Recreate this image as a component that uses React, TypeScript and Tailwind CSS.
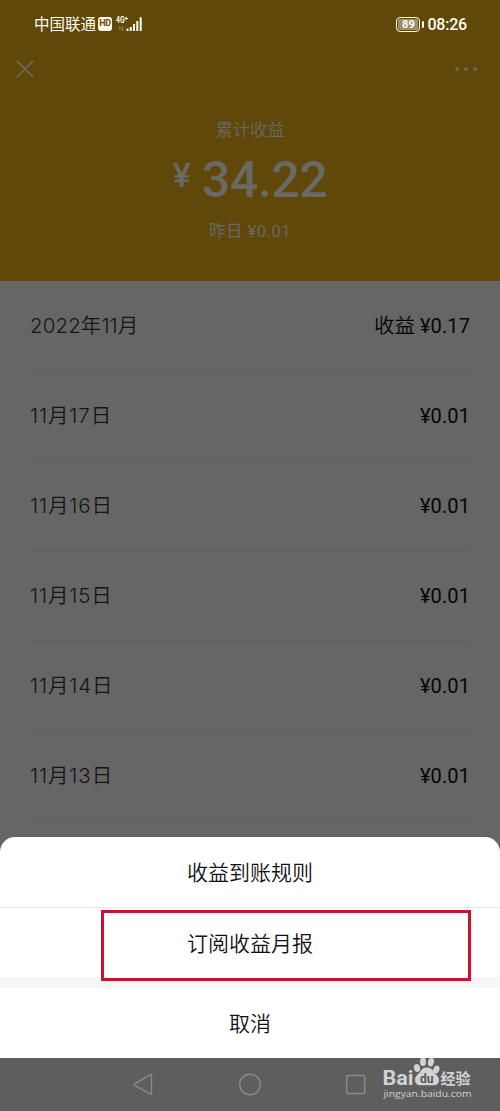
interface Earning {
  label: string;
  prefix?: string;
  amount: string;
}

const earnings: Earning[] = [
  { label: "2022年11月", prefix: "收益", amount: "¥0.17" },
  { label: "11月17日", amount: "¥0.01" },
  { label: "11月16日", amount: "¥0.01" },
  { label: "11月15日", amount: "¥0.01" },
  { label: "11月14日", amount: "¥0.01" },
  { label: "11月13日", amount: "¥0.01" },
];

function StatusBar() {
  return (
    <div className="flex h-12 items-center justify-between pl-[34px] pr-[33px] text-[#fffdf3]">
      <div className="flex items-center">
        <span className="pt-[3px] text-[15.5px] leading-none">中国联通</span>
        <span className="ml-[2px] flex h-[14px] w-[14px] items-center justify-center rounded-[3px] bg-[#fff8e4] text-[9px] font-bold tracking-[-0.3px] text-[#5f480a]">
          HD
        </span>
        <svg width="28" height="18" viewBox="0 0 28 18" className="ml-[3px]">
          <text x="1" y="8" fontSize="8.5" fontWeight="700" fill="currentColor" textLength="8.5" lengthAdjust="spacingAndGlyphs">
            4G
          </text>
          <path d="M9.500 3.500h3.500M11.200 1.800v3.500" stroke="currentColor" strokeWidth="1" />
          <path d="M5 15.500v-4l-1.200 1.200M7.500 11.500v4l1.200-1.200" stroke="#a08c55" strokeWidth="1" fill="none" />
          <path
            d="M11.500 13.500h2v2.500h-2zM14.800 12h2v4h-2zM18 9h2v7h-2zM21.300 6h2v10h-2zM24.700 2.300h2v13.700h-2z"
            fill="currentColor"
          />
        </svg>
      </div>
      <div className="flex items-center">
        <span className="flex h-[15px] w-6 items-center justify-center rounded-[4px] border-[1.5px] border-[#fff8e4] p-px">
          <span className="flex h-full w-full items-center justify-center rounded-[1px] bg-[#9c8e67] text-[11px] font-bold leading-none">
            89
          </span>
        </span>
        <span className="ml-[2px] h-[7px] w-[2px] rounded-full bg-[#fff8e4]" />
        <span className="ml-[3px] pt-px text-[16px] font-medium leading-none tracking-[-0.2px]">08:26</span>
      </div>
    </div>
  );
}

function Header() {
  return (
    <header className="h-[281px] bg-[#5f480a] text-[#6b6964]">
      <StatusBar />
      <div className="flex h-[42px] items-center justify-between pl-4 pr-[23px]">
        <svg width="18" height="18" viewBox="0 0 18 18" fill="none" stroke="#6b675d" strokeWidth="1.7">
          <path d="M0.800 0.800L17.200 17.200M17.200 0.800L0.800 17.200" />
        </svg>
        <div className="flex gap-[5px]">
          <span className="h-1 w-1 rounded-full bg-[#6b675d]" />
          <span className="h-1 w-1 rounded-full bg-[#6b675d]" />
          <span className="h-1 w-1 rounded-full bg-[#6b675d]" />
        </div>
      </div>
      <div className="flex flex-col items-center pt-[27px]">
        <p className="text-[17.3px] font-[350] leading-[26px]">累计收益</p>
        <div className="mt-[6px] flex items-start font-medium leading-none">
          <span className="mt-[9px] text-[34px] leading-none">¥</span>
          <span className="ml-[11px] text-[50px] leading-[63px] tracking-[-0.4px]">34.22</span>
        </div>
        <p className="mt-[7px] text-[16.5px] leading-[26px] tracking-[0.5px]">昨日 ¥0.01</p>
      </div>
    </header>
  );
}

function NavBar() {
  return (
    <nav className="relative flex h-[53px] bg-[#5e5e5e]">
      <svg width="500" height="53" viewBox="0 0 500 53" fill="none" stroke="#8b8b8b" strokeWidth="1.4">
        <path d="M134.500 25.800L150.200 16.800Q151.500 16.200 151.500 17.500V35Q151.500 36.500 150.200 35.700L134.500 27.300Q133.500 26.500 134.500 25.800Z" />
        <circle cx="250" cy="26.500" r="10.300" />
        <rect x="346.700" y="17.500" width="18" height="18" rx="0.800" />
      </svg>
      <div className="absolute left-[383px] top-[-2px] h-[50px] w-[92px] text-[#d2d2d2]">
        <svg width="92" height="50" viewBox="0 0 92 50" fill="currentColor">
          <text x="-0.500" y="28.500" fontSize="19.5" fontWeight="700" textLength="31" lengthAdjust="spacingAndGlyphs">
            Bai
          </text>
          <ellipse cx="34" cy="12" rx="3" ry="4" transform="rotate(-15 34 12)" />
          <ellipse cx="40" cy="5.700" rx="3" ry="4.300" />
          <ellipse cx="48" cy="6.200" rx="3" ry="4.300" transform="rotate(12 48 6)" />
          <ellipse cx="53.200" cy="13.500" rx="3" ry="4" transform="rotate(20 53 14)" />
          <path d="M43.500 11.500c-3.500 0-5 2-6.500 4.500-2 2.800-5 4-5 8 0 3.500 2.500 5.300 5.500 5.300h13c3.500 0 5.500-1.800 5.500-5.300 0-4-3.500-5.500-5.500-8.500-1.500-2.500-3-4-7-4Z" />
          <text x="37" y="26.500" fontSize="13" fontWeight="700" fill="#555555" textLength="13.500" lengthAdjust="spacingAndGlyphs">
            du
          </text>
          <text x="57.500" y="27.500" fontSize="15" fontWeight="700" textLength="30" lengthAdjust="spacingAndGlyphs">
            经验
          </text>
          <text x="0.500" y="40.500" fontSize="9.5" fontFamily="Open Sans" fontWeight="500" textLength="88" lengthAdjust="spacingAndGlyphs">
            jingyan.baidu.com
          </text>
        </svg>
      </div>
    </nav>
  );
}

export default function App() {
  return (
    <div className="relative flex h-[1111px] w-[500px] flex-col overflow-hidden bg-[#666666] font-[Roboto,'Noto_Sans_CJK_SC',sans-serif]">
      <Header />
      <main className="h-[777px] px-[30px]">
        {earnings.map((item) => (
          <div
            key={item.label}
            className="flex h-[90px] items-center justify-between border-b border-[#5f5f5f] pt-px text-[20.5px]"
          >
            <span
              className={`font-[Inter,'Noto_Sans_CJK_SC',sans-serif] font-[350] text-[#151515] ${
                item.prefix ? "tracking-[0.1px]" : "tracking-[0.9px]"
              }`}
            >
              {item.label}
            </span>
            <span className="text-[#050505]">
              {item.prefix && <span className="mr-[5px] font-[350]">{item.prefix}</span>}
              <span className="text-[20px] tracking-[0.1px]">{item.amount}</span>
            </span>
          </div>
        ))}
      </main>
      <NavBar />
      <section className="absolute inset-x-0 top-[837px] h-[221px] overflow-hidden rounded-t-[15px] bg-white text-[21px] font-[350] text-[#111111]">
        <button className="flex h-[71px] w-full items-center justify-center border-b border-[#e8e8e8] pt-[3px]">
          收益到账规则
        </button>
        <button className="flex h-[69px] w-full items-center justify-center pt-1">
          订阅收益月报
        </button>
        <div className="h-[11px] bg-[#f6f6f6]" />
        <button className="flex h-[70px] w-full items-center justify-center pt-1">
          取消
        </button>
        <div className="absolute left-[101px] top-[73px] h-[71px] w-[370px] border-3 border-[#c9142e]" />
      </section>
    </div>
  );
}
